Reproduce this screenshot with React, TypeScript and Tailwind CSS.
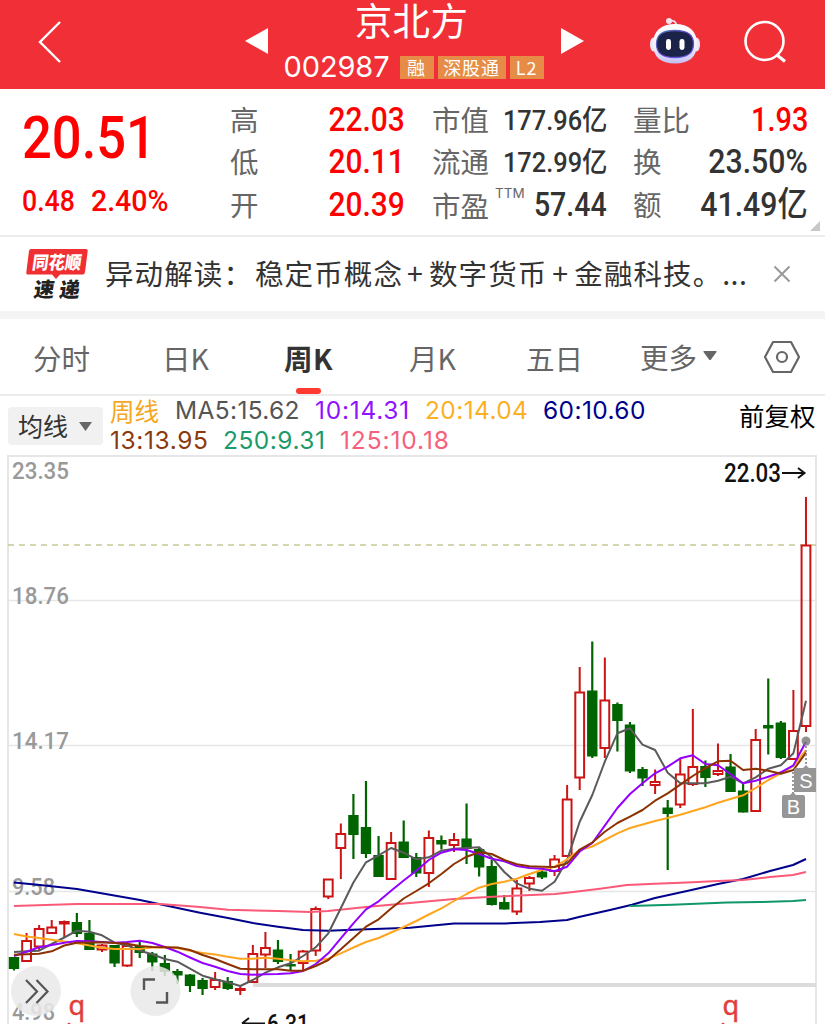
import type { ReactNode } from 'react'

type Candle = [color: 'r' | 'g', top: number, bottom: number, high: number, low: number]

const candles: Candle[] = [
  ['g', 957, 969, 957, 970.5],
  ['r', 941, 961, 933, 961],
  ['r', 929, 946.5, 925, 950],
  ['r', 927.5, 933, 920, 933],
  ['r', 922, 923.5, 920.5, 937],
  ['g', 922, 934, 913, 937],
  ['g', 933, 950, 920, 950],
  ['r', 945.5, 949.5, 944, 952],
  ['g', 945, 963.5, 945, 967],
  ['r', 946, 965.5, 945, 967],
  ['g', 946, 953, 941, 958],
  ['g', 953.5, 962.5, 952, 971],
  ['g', 963, 972, 955, 976],
  ['g', 971, 975.5, 969, 984],
  ['g', 974.5, 986, 974, 992],
  ['g', 980, 989, 978, 995],
  ['r', 980, 987, 972, 990],
  ['g', 981, 989, 977, 990],
  ['r', 989, 990, 986, 995],
  ['r', 954, 982, 945, 982],
  ['r', 948, 954.5, 932, 968],
  ['g', 949.5, 962, 940, 964],
  ['g', 964, 966.5, 954, 970.5],
  ['r', 951.5, 963, 950, 971],
  ['r', 909, 950.5, 906.5, 956],
  ['r', 879.5, 896.5, 879, 899],
  ['r', 834, 848, 823.5, 879],
  ['g', 815, 835, 794, 859],
  ['g', 827, 854, 781, 858],
  ['g', 855, 877, 836, 877],
  ['r', 843, 879, 832, 879],
  ['g', 841.5, 858, 820.5, 858],
  ['g', 857, 873.5, 853, 877],
  ['r', 838, 873, 830.5, 887],
  ['g', 840, 844.5, 835.5, 849.5],
  ['r', 840, 845, 833, 852],
  ['g', 838.5, 849, 803.5, 864],
  ['g', 849, 867.5, 847, 876.5],
  ['g', 866, 905, 860, 905.5],
  ['g', 902, 909.5, 895, 909.5],
  ['r', 888.5, 911.5, 880, 915],
  ['r', 878, 883.5, 876, 891],
  ['g', 871.5, 877.5, 870, 879],
  ['r', 859.5, 871, 855, 876],
  ['r', 799.5, 856, 785, 856],
  ['r', 692.5, 777.5, 667, 790],
  ['g', 690.5, 756.5, 641.5, 758],
  ['r', 700.5, 748, 657.5, 758],
  ['g', 704, 721, 702.5, 751.5],
  ['g', 724.5, 771.5, 722, 773],
  ['g', 769, 778.5, 767, 786],
  ['r', 782, 785, 769.5, 794],
  ['g', 807.5, 814, 800, 870],
  ['r', 774.5, 804.5, 759, 808],
  ['r', 767, 784, 709, 786],
  ['g', 766, 778, 760.5, 787],
  ['r', 771, 774, 743.5, 776],
  ['g', 766.5, 792, 754, 792],
  ['g', 790.5, 812.5, 784, 812.5],
  ['r', 740, 811, 729, 812],
  ['g', 725, 728.5, 678.5, 754.5],
  ['g', 722.5, 758, 721, 759],
  ['r', 731, 759, 690, 759],
  ['r', 545.5, 726, 497, 732],
]

const candleX = (i: number) => 14 + i * 12.571

// One value per candle
const ma5 = [952, 951.3, 950.7, 944, 937.5, 930.7, 931.7, 935.3, 942.7, 945.3, 950.7, 954.3, 959, 961.7, 968.7, 975.7, 979.3, 982.3, 986, 980, 972.7, 967.3, 963.3, 956, 947.3, 933.3, 908.3, 882.5, 862.3, 855.3, 848, 852.7, 859.3, 857.3, 850.7, 848.7, 848, 847.3, 857.3, 872, 883.3, 888.7, 890.7, 881.7, 860, 821.7, 795, 761.7, 733.3, 728.3, 744.7, 750, 772.7, 783.3, 783.2, 783.3, 780.7, 776.7, 783.3, 777.3, 768.7, 765.3, 753.3, 700.7]
const ma10 = [956, 951.7, 947.3, 945, 942.7, 941, 941.3, 942, 942.7, 942, 940.7, 943, 947, 951.7, 957.5, 963, 966.7, 971, 974, 974.7, 974.3, 974, 973.3, 971, 964, 953.3, 938.3, 923.3, 909.3, 901.3, 890.7, 880.5, 870.7, 860, 852.7, 849.3, 850, 854, 858.7, 861.3, 866, 868, 868.7, 871.3, 866.7, 851.5, 843, 825.7, 808, 794, 783.3, 773.3, 766.7, 758.3, 755.3, 764, 765.3, 774, 783.3, 780.7, 776.7, 772.3, 765.3, 741.7]
const ma13 = [954.7, 954.3, 953.7, 951.3, 945.5, 942.7, 942.5, 942.3, 943, 943.7, 946, 947, 947.3, 947.5, 950, 955, 959, 964, 968.7, 969.3, 969.3, 969.3, 970.7, 970.7, 966, 960, 949.3, 938, 926.7, 919.3, 908.5, 898.5, 891, 883.3, 874, 864, 856.7, 852.3, 854, 860, 864.3, 866.3, 866.7, 867, 863.3, 849.5, 842.5, 831.7, 823, 816.7, 810, 800.7, 793.3, 784.7, 776, 768, 761.3, 760.7, 770, 768.7, 770.7, 773.7, 770, 752.7]
const ma20 = [934, 936.5, 938, 939.7, 941.5, 943.3, 945.5, 947.7, 949, 949, 949, 947.5, 947.6, 948, 950.7, 953, 954.5, 956.7, 958.7, 958.7, 957.7, 958.7, 960.3, 961.3, 960.7, 958.7, 953.3, 947.5, 942, 938, 932.5, 927, 921, 914.5, 908.3, 901, 894, 887.7, 884, 881.7, 878.7, 874, 870, 866.7, 859.3, 850, 846.5, 840, 833.3, 828, 824.5, 821, 818, 814.7, 811, 807.3, 802.7, 799, 795.3, 788, 780, 773.3, 766, 750]

const toPoints = (values: number[]) => values.map((y, i) => `${candleX(i).toFixed(1)},${y}`).join(' ')

const lines = [
  { color: '#00008b', points: '14,882.5 40,885 77,889 140,900 200,912.7 228,918 253,923 278,926.7 303,930 328,930.7 353,929.7 410,927.7 454,923.5 505,923.5 540,922 567,920 580,916.7 610,910 632,904.7 655,898 687,891 718,884 743,879 770,871 793,865 806,859' },
  { color: '#fa5a78', points: '14,906 77,904 160,904 200,907 228,909.7 278,911 310,912 328,911 366,907 410,903 454,899 492,896.7 555,894 567,892.7 600,888.7 627,885 655,883.7 687,882.5 718,881 743,880 770,877 793,875 806,872' },
  { color: '#109868', points: '630,906 672,904.7 727,902.5 760,902 793,901 806,900' },
  { color: '#5a5a5a', points: toPoints(ma5) },
  { color: '#ffa51e', points: toPoints(ma20) },
  { color: '#9400ff', points: toPoints(ma10) },
  { color: '#8b3200', points: toPoints(ma13) },
]

const axis = [
  { label: '23.35', y: 479 },
  { label: '18.76', y: 603.5 },
  { label: '14.17', y: 748.5 },
  { label: '9.58', y: 895 },
  { label: '4.98', y: 1020 },
]

const CJK = "font-['Noto_Sans_CJK_SC',sans-serif]"

function Robot() {
  return (
    <svg width="52" height="48" viewBox="0 0 52 48" className="block">
      <defs>
        <linearGradient id="shell" x1="0" y1="0" x2="0" y2="1">
          <stop offset="0" stopColor="#ffffff" />
          <stop offset="0.6" stopColor="#f1eefc" />
          <stop offset="1" stopColor="#c3bdf2" />
        </linearGradient>
        <linearGradient id="rim" x1="0" y1="0" x2="1" y2="1">
          <stop offset="0" stopColor="#3f7fae" />
          <stop offset="0.5" stopColor="#6a3fd0" />
          <stop offset="1" stopColor="#5b63ee" />
        </linearGradient>
      </defs>
      <path d="M20 4 Q27 2 28 10" fill="none" stroke="#e3dcf4" strokeWidth="1.8" />
      <circle cx="20" cy="4" r="3" fill="#f6e3ec" />
      <ellipse cx="4.5" cy="27.5" rx="3.5" ry="7" fill="#ebe5fa" />
      <ellipse cx="47.5" cy="27.5" rx="3.5" ry="7" fill="#ebe5fa" />
      <path d="M26 7 C40 7 48 14 48 27 C48 40 40 46.500 26 46.500 C12 46.500 4 40 4 27 C4 14 12 7 26 7 Z" fill="url(#shell)" />
      <path d="M26 13.500 C38 13.500 44.500 17 44.500 27 C44.500 37 38 40.500 26 40.500 C14 40.500 7.500 37 7.500 27 C7.500 17 14 13.500 26 13.500 Z" fill="#1b2448" stroke="url(#rim)" strokeWidth="1.300" />
      <rect x="17" y="22" width="5" height="11" rx="2.4" fill="#fff" />
      <rect x="30.5" y="22" width="5" height="11" rx="2.4" fill="#fff" />
    </svg>
  )
}

function Header() {
  return (
    <header className="flex h-[88.5px] bg-[#f03036] text-white">
      <svg width="245" height="88" viewBox="0 0 245 88" className="shrink-0">
        <path d="M60 22 L40 42 L60 62" fill="none" stroke="#fff" strokeWidth="2.4" />
      </svg>
      <div className="flex w-[339px] shrink-0 justify-between">
        <svg width="24" height="88" viewBox="0 0 24 88">
          <path d="M0 41 L23 28 V54 Z" fill="#fff" />
        </svg>
        <div className="flex w-[270px] flex-col items-center">
          <div className={`${CJK} mr-[6px] h-[46px] text-[37.5px] leading-[38px] tracking-[0.3px]`}>京北方</div>
          <div className="mr-[2px] flex h-[42px] items-center">
            <span className="w-[116px] font-['Inter'] text-[29px] leading-[40px] tracking-[-0.1px]">002987</span>
            <div className={`${CJK} flex gap-1 text-[18px] leading-[23px] tracking-[0.8px]`}>
              <span className="w-[34px] bg-[#e68c46] text-center">融</span>
              <span className="w-[68px] bg-[#e68c46] text-center">深股通</span>
              <span className="w-[34px] bg-[#e68c46] text-center">L2</span>
            </div>
          </div>
        </div>
        <svg width="24" height="88" viewBox="0 0 24 88">
          <path d="M24 41 L1 28 V54 Z" fill="#fff" />
        </svg>
      </div>
      <div className="ml-[65px] mt-[17px]">
        <Robot />
      </div>
      <svg width="46" height="46" viewBox="0 0 46 46" className="ml-[42px] mt-5">
        <circle cx="21.5" cy="21" r="19" fill="none" stroke="#fff" strokeWidth="2.6" />
        <path d="M34 35 L42 41.5" stroke="#fff" strokeWidth="3.2" />
      </svg>
    </header>
  )
}

function Row({ label, children }: { label: ReactNode; children: ReactNode }) {
  return (
    <div className="flex h-[42.5px] items-center justify-between">
      <span className={`${CJK} flex whitespace-nowrap text-[28.5px] leading-[42px] text-[#666]`}>{label}</span>
      {children}
    </div>
  )
}

function Num({ children, className = 'scale-x-[0.89] text-[#333]' }: { children: ReactNode; className?: string }) {
  return (
    <span className={`origin-right whitespace-nowrap font-['Roboto','Noto_Sans_CJK_SC',sans-serif] text-[34px] font-medium leading-[40px] ${className}`}>
      {children}
    </span>
  )
}

function SmallNum({ children }: { children: ReactNode }) {
  return (
    <span className="mt-[3px] origin-right scale-x-[0.89] whitespace-nowrap font-['Roboto','Noto_Sans_CJK_SC',sans-serif] text-[28.5px] font-medium leading-[39px] text-[#333]">
      {children}
    </span>
  )
}

function Quote() {
  return (
    <section className="relative flex h-[148px] border-b-2 border-[#ececec] pt-[9px]">
      <div className="w-[230px] shrink-0 pl-[22px] font-['Roboto'] font-medium text-[#ff0000]">
        <div className="mt-[6px] w-fit origin-left scale-x-[0.89] text-[59px] leading-[68px]">20.51</div>
        <div className="mt-[12px] flex text-[30px] leading-[34px]">
          <span className="w-[69px] origin-left scale-x-[0.89]">0.48</span>
          <span className="origin-left scale-x-[0.95]">2.40%</span>
        </div>
      </div>
      <div className="w-[175px]">
        <Row label="高"><Num className="scale-x-[0.88] text-[#ff0000]">22.03</Num></Row>
        <Row label="低"><Num className="scale-x-[0.88] text-[#ff0000]">20.11</Num></Row>
        <Row label="开"><Num className="scale-x-[0.88] text-[#ff0000]">20.39</Num></Row>
      </div>
      <div className="ml-[27px] w-[175px]">
        <Row label="市值"><SmallNum>177.96亿</SmallNum></Row>
        <Row label="流通"><SmallNum>172.99亿</SmallNum></Row>
        <Row
          label={
            <>
              <span className="pt-[2px]">市盈</span>
              <span className="ml-[6px] mt-[4px] w-0 font-['Inter'] text-[13.5px] leading-[15px]">TTM</span>
            </>
          }
        >
          <Num className="scale-x-[0.84] text-[#333]">57.44</Num>
        </Row>
      </div>
      <div className="ml-[26px] w-[175px]">
        <Row label="量比"><Num className="scale-x-[0.85] text-[#ff0000]">1.93</Num></Row>
        <Row label="换"><Num>23.50%</Num></Row>
        <Row label="额"><Num>41.49亿</Num></Row>
      </div>
      <svg width="10" height="10" viewBox="0 0 10 10" className="absolute bottom-[4px] right-[5px]">
        <path d="M10 0 V10 H0 Z" fill="#c8c8c8" />
      </svg>
    </section>
  )
}

function News() {
  return (
    <section className="flex h-[74px] items-center">
      <svg width="64" height="54" viewBox="0 0 64 54" className="ml-[25px] shrink-0">
        <path d="M6 2 H61 Q63 2 62.700 4 L60 25 Q59.600 27.500 58 27.500 H35 L31 32 L27 27.500 H3 Q1 27.500 1.300 25.500 L4 4 Q4.300 2 6 2 Z" fill="#ef2f32" />
        <g className={CJK} fontWeight="900">
          <text transform="translate(6.500 21.500) skewX(-8)" fontSize="18" textLength="49" lengthAdjust="spacingAndGlyphs" fill="#fff">同花顺</text>
          <text transform="translate(8 50) skewX(-8)" fontSize="20.500" textLength="46" fill="#222">速递</text>
        </g>
      </svg>
      <p className={`${CJK} mb-[1px] ml-4 w-[645px] shrink-0 whitespace-nowrap text-[28.5px] leading-[42px] tracking-[1.1px] text-[#333]`}>
        异动解读：<span className="ml-[2px]">稳定币概念</span>
        <span className="ml-[4px] mr-[5px]">+</span>数字货币<span className="mx-[5px]">+</span>金融科技。<span className="tracking-[0.4px]">...</span>
      </p>
      <svg width="18" height="18" viewBox="0 0 18 18" className="ml-[23px]">
        <path d="M1.500 1.500 L16.500 16.500 M16.500 1.500 L1.500 16.500" stroke="#999" strokeWidth="2" />
      </svg>
    </section>
  )
}

function Tabs() {
  return (
    <nav className={`${CJK} flex h-[77.5px] border-b-2 border-[#ececec] pl-[33px] text-[28.5px] leading-[77px] text-[#666]`}>
      <span className="w-[129px]">分时</span>
      <span className="w-[122px]">日K</span>
      <span className="relative w-[125px] font-bold tracking-[0.6px] text-[#333]">
        周K
        <i className="absolute bottom-0 left-[12px] h-[6px] w-[25px] rounded-full bg-[#ff3a30]" />
      </span>
      <span className="w-[117px]">月K</span>
      <span className="w-[114px]">五日</span>
      <span className="flex w-[123px] items-center gap-[6px]">
        更多
        <svg width="14" height="10" viewBox="0 0 14 10"><path d="M1 0 H13 Q14 0 13.500 1 L8 8.500 Q7 9.500 6 8.500 L0.500 1 Q0 0 1 0 Z" fill="#666" /></svg>
      </span>
      <svg width="38" height="76" viewBox="0 0 38 76">
        <path d="M10 23 H28 L36 38 L28 53 H10 L2 38 Z" fill="none" stroke="#666" strokeWidth="2.2" strokeLinejoin="round" />
        <circle cx="19" cy="38" r="5" fill="none" stroke="#666" strokeWidth="2.2" />
      </svg>
    </nav>
  )
}

function Legend() {
  return (
    <section className="flex h-[59px] pl-2">
      <div className={`${CJK} mt-[11px] flex h-[38px] w-[95px] shrink-0 items-center gap-[11px] rounded bg-[#f1f1f1] pl-[10px] text-[25px] text-[#333]`}>
        均线
        <svg width="13" height="9" viewBox="0 0 13 9"><path d="M0 0 H13 L6.500 9 Z" fill="#666" /></svg>
      </div>
      <div className="ml-[7px] w-[629px] font-['Inter'] text-[24.5px] leading-[29px]">
        <div className="flex h-[30px] whitespace-nowrap">
          <span className={`${CJK} w-[65px] text-[#f5a623]`}>周线</span>
          <span className="w-[140px] tracking-[0.35px] text-[#555]">MA5:15.62</span>
          <span className="w-[110px] tracking-[0.75px] text-[#9013fe]">10:14.31</span>
          <span className="w-[118px] tracking-[0.4px] text-[#fcb123]">20:14.04</span>
          <span className="tracking-[0.4px] text-[#00008b]">60:10.60</span>
        </div>
        <div className="flex whitespace-nowrap">
          <span className="w-[113px] tracking-[0.6px] text-[#8b3a0e]">13:13.95</span>
          <span className="w-[117px] tracking-[0.5px] text-[#1b9a6c]">250:9.31</span>
          <span className="tracking-[0.9px] text-[#f5607c]">125:10.18</span>
        </div>
      </div>
      <span className={`${CJK} whitespace-nowrap text-[25.5px] leading-[38px] text-black`}>前复权</span>
    </section>
  )
}

function Chart() {
  return (
    <svg width="825" height="569" viewBox="0 455 825 569" className="block font-['Roboto']">
      <g stroke="#e6e6e6" fill="none">
        <path d="M8 1024 V456 H816 V1024" strokeWidth="2" />
        <path d="M8 600.500 H816 M8 745.500 H816 M8 891.500 H816" strokeWidth="1.300" />
      </g>
      <path d="M253 985 H816" stroke="#dcdcdc" strokeWidth="4" />
      <path d="M8 545 H816" stroke="#c8c896" strokeWidth="1.300" strokeDasharray="6 5" />

      {axis.map((a) => (
        <text key={a.label} x="12" y={a.y} fontSize="24" fontWeight="500" fill="#999" textLength={a.label.length === 5 ? 57 : 43} lengthAdjust="spacingAndGlyphs">
          {a.label}
        </text>
      ))}

      {candles.map(([color, top, bottom, high, low], i) => {
        const x = candleX(i)
        if (color === 'g') {
          return (
            <g key={i} fill="#006400">
              <rect x={x - 1.1} y={high} width="2.200" height={low - high} />
              <rect x={x - 5.2} y={top} width="10.400" height={bottom - top} />
            </g>
          )
        }
        return (
          <g key={i} fill="none" stroke="#cc1414" strokeWidth="2">
            <path d={`M${x} ${high} V${top} M${x} ${bottom} V${low}`} />
            <rect x={x - 4.4} y={top} width="8.800" height={bottom - top} />
          </g>
        )
      })}

      {lines.map((l) => (
        <polyline key={l.color} points={l.points} fill="none" stroke={l.color} strokeWidth="2" strokeLinejoin="round" />
      ))}

      {/* trade markers */}
      <circle cx="806" cy="741" r="4.500" fill="#777" fillOpacity="0.8" />
      <path d="M806 746 V768 M793 772 V795" stroke="#999" strokeWidth="2" strokeDasharray="2 2" />
      <g fill="#969696">
        <path d="M796 768 H803 L806 765 L809 768 H816 V792 H794 V770 Q794 768 796 768 Z" />
        <path d="M784 795 H790 L793 792 L796 795 H803 Q805 795 805 797 V816 Q805 818 803 818 H784 Q782 818 782 816 V797 Q782 795 784 795 Z" />
      </g>
      <g fill="#fff" fontSize="20" textAnchor="middle" className="font-['Liberation_Sans']">
        <text x="806" y="787.500">S</text>
        <text x="793.500" y="814">B</text>
      </g>

      <g fill="#111" fontWeight="500" fontSize="25">
        <text x="724" y="482" textLength="57" lengthAdjust="spacingAndGlyphs">22.03</text>
        <text x="267" y="1033" textLength="42" lengthAdjust="spacingAndGlyphs">6.31</text>
      </g>
      <g fill="none" stroke="#111" strokeWidth="2">
        <path d="M782 473 H804 M798 468 L804.500 473 L798 478" />
        <path d="M265 1023.500 H242 M249 1018 L242 1023.500" />
      </g>

      {/* floating buttons */}
      <g fill="#e9e9e9" fillOpacity="0.86">
        <circle cx="36" cy="991" r="25" />
        <circle cx="155.500" cy="991" r="25" />
      </g>
      <path d="M26 980 L37 991.500 L26 1003 M36.500 980 L47.500 991.500 L36.500 1003" fill="none" stroke="#555" strokeWidth="2.200" />
      <path d="M144 990 V979.500 H155 M156 1002.500 H167 V992" fill="none" stroke="#555" strokeWidth="2.400" />

      <g fill="#e23c3c" stroke="#e23c3c" strokeWidth="0.500" fontSize="27" className="font-['Noto_Sans']">
        <text x="68.500" y="1014.500">q</text>
        <text x="722.500" y="1014.500">q</text>
      </g>
      <path d="M67 1024 L69 1022.500 L71 1024 Z M721 1024 L723 1022.500 L725 1024 Z" fill="#e23c3c" />
    </svg>
  )
}

export default function App() {
  return (
    <main className="h-[1024px] w-[825px] overflow-hidden bg-white">
      <Header />
      <Quote />
      <News />
      <div className="h-2 bg-[#f4f4f4]" />
      <Tabs />
      <Legend />
      <Chart />
    </main>
  )
}
